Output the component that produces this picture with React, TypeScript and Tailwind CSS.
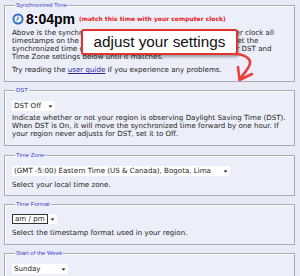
import React from "react";

const text = "text-[7.1px] leading-[8px]";
const fieldset = "border border-[#a9abb8] bg-[#eceef9] px-[7px] shadow-[inset_1px_1px_0_#fff]";
const legend = "ml-[3px] px-[1px] font-['Liberation_Sans',Tahoma,sans-serif] text-[6px] leading-[8px] text-[#3b3bc4]";

function Select({ label, width, boxed }: { label: string; width: string; boxed?: boolean }) {
  return (
    <div className={`flex h-[10px] items-center bg-white ${text} ${width}`}>
      <div
        className={`flex h-full flex-1 items-center whitespace-nowrap px-[2px] ${
          boxed ? "border border-[#333]" : ""
        }`}
      >
        {label}
      </div>
      <svg width="9" height="10" viewBox="0 0 9 10" className="shrink-0">
        <path d="M2.5 4.5 H6.5 L4.5 6.5 Z" fill="#111" />
      </svg>
    </div>
  );
}

function Clock() {
  return (
    <svg width="12" height="12" viewBox="0 0 12 12">
      <circle cx="6" cy="6" r="5.5" fill="#2f6fc4" />
      <circle cx="6" cy="6" r="3.6" fill="#eef4ff" />
      <path d="M6 3.6 V6 L4.3 7.3" stroke="#1c3f7a" strokeWidth="0.9" fill="none" />
    </svg>
  );
}

export default function App() {
  return (
    <div className="relative h-[276px] w-[300px] overflow-hidden bg-[#e8eaf6] pl-[4px] pr-[5px] pt-[1px] font-['DejaVu_Sans',Verdana,sans-serif] text-[#222]">
      <fieldset className={`${fieldset} h-[81px]`}>
        <legend className={legend}>Synchronized Time</legend>
        <div className="mt-[2px] flex items-center gap-[2px]">
          <Clock />
          <span className="font-['Liberation_Sans',Arial,sans-serif] text-[14px] font-bold leading-[16px] text-black">
            8:04pm
          </span>
          <span className="ml-[2px] text-[6px] font-bold leading-[8px] text-[#e8201a]">
            (match this time with your computer clock)
          </span>
        </div>
        <p className={`mt-[2px] whitespace-nowrap ${text}`}>
          Above is the synchronized time. When it matches your computer clock all
          <br />
          timestamps on the website are shown in your own local time. Set the
          <br />
          synchronized time on your computer. If it is wrong, change your DST and
          <br />
          Time Zone settings below until it matches.
        </p>
        <p className={`mt-[5px] ${text}`}>
          Try reading the <span className="text-[#2a2a9e] underline">user guide</span> if you
          experience any problems.
        </p>
      </fieldset>

      <fieldset className={`${fieldset} mt-[4px] h-[60px]`}>
        <legend className={legend}>DST</legend>
        <div className="mt-[7px]">
          <Select label="DST Off" width="w-[43px]" />
        </div>
        <p className={`mt-[3px] ${text}`}>
          Indicate whether or not your region is observing Daylight Saving Time (DST).
          When DST is On, it will move the synchronized time forward by one hour. If
          your region never adjusts for DST, set it to Off.
        </p>
      </fieldset>

      <fieldset className={`${fieldset} mt-[5px] h-[45px]`}>
        <legend className={legend}>Time Zone</legend>
        <div className="mt-[7px]">
          <Select label="(GMT -5:00) Eastern Time (US & Canada), Bogota, Lima" width="w-[218px]" />
        </div>
        <p className={`mt-[5px] ${text}`}>Select your local time zone.</p>
      </fieldset>

      <fieldset className={`${fieldset} mt-[4px] h-[45px]`}>
        <legend className={legend}>Time Format</legend>
        <div className="mt-[6px]">
          <Select label="am / pm" width="w-[45px]" boxed />
        </div>
        <p className={`mt-[5px] ${text}`}>Select the timestamp format used in your region.</p>
      </fieldset>

      <fieldset className={`${fieldset} mt-[4px] h-[40px]`}>
        <legend className={legend}>Start of the Week</legend>
        <div className="mt-[7px]">
          <Select label="Sunday" width="w-[56px]" />
        </div>
      </fieldset>

      <div className="absolute left-[81px] top-[29px] flex h-[26px] w-[157px] items-center justify-center rounded-[3px] border-2 border-[#e2332c] bg-white shadow-[1px_2px_3px_rgba(0,0,0,0.35)]">
        <span className="font-['Liberation_Sans',Arial,sans-serif] text-[15.3px] leading-none text-[#111]">
          adjust your settings
        </span>
      </div>
      <svg className="absolute left-[228px] top-[50px]" width="30" height="34" viewBox="0 0 30 34">
        <path
          d="M6 4 C18 4 26 10 20 18 C17 23 14 26 12 29"
          stroke="#e8403a"
          strokeWidth="2.6"
          fill="none"
          strokeLinecap="round"
        />
        <path
          d="M10 17 L11.5 30 L24 24"
          stroke="#e8403a"
          strokeWidth="2.6"
          fill="none"
          strokeLinecap="round"
          strokeLinejoin="round"
        />
      </svg>
    </div>
  );
}
